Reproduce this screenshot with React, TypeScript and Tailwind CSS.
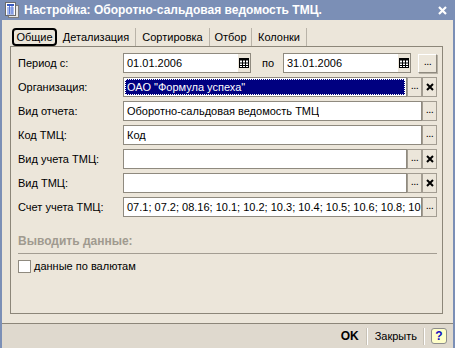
import React from "react";

const font = { fontFamily: '"Liberation Sans", Arial, sans-serif' };

const Dots = () => <span className="leading-none -mt-[4px] text-[11px] font-normal tracking-[-0.5px]">...</span>;

const SmallBtn = ({ children }: { children: React.ReactNode }) => (
    <div className="w-[15px] h-[20px] shrink-0 flex items-center justify-center bg-[#ece6da] border border-[#a39d92] text-black text-[12px]">
        {children}
    </div>
);

const Cross = () => (
    <svg width="8" height="8" viewBox="0 0 8 8">
        <path d="M1 1 L7 7 M7 1 L1 7" stroke="#000" strokeWidth="2" />
    </svg>
);

const CalIcon = () => (
    <svg width="10" height="10" viewBox="0 0 10 10">
        <rect x="0.5" y="0.5" width="9" height="9" fill="#fff" stroke="#000" />
        <rect x="0.5" y="0.5" width="9" height="2" fill="#000" />
        <path d="M0 5 H10 M0 7.5 H10 M3.5 2 V10 M6.5 2 V10" stroke="#000" strokeWidth="1" />
    </svg>
);

const Input = ({ value, className = "", selected = false }: { value: string, className?: string, selected?: boolean }) => (
    <div className={`h-[20px] min-w-0 border border-[#8f8a7f] bg-white flex items-center overflow-hidden whitespace-nowrap ${className}`}>
        {selected ? (
            <div className="m-[1px] h-[16px] flex-1 bg-[#000080] text-white outline-1 outline-dotted outline-white -outline-offset-1 pl-[2px] leading-[16px]">
                {value}
            </div>
        ) : (
            <span className="pl-[3px] overflow-hidden">{value}</span>
        )}
    </div>
);

const Row = ({ label, children }: { label: string, children: React.ReactNode }) => (
    <div className="flex items-center h-[20px]">
        <div className="w-[105px] shrink-0">{label}</div>
        <div className="flex flex-1 min-w-0 items-center">{children}</div>
    </div>
);

export default function App() {
    return (
        <div style={font} className="w-[455px] h-[348px] bg-[#ece6da] text-[11px] text-black flex flex-col border-l-2 border-r-2 border-[#7b8fb6] overflow-hidden">
            <div className="h-[20px] -mx-[2px] bg-[#7b8fb6] flex items-center shrink-0">
                <svg className="ml-[4px]" width="16" height="17" viewBox="0 0 16 17">
                    <rect x="4.5" y="3.5" width="10" height="12" fill="#e8e8e8" stroke="#7c7c7c" />
                    <rect x="1.5" y="0.5" width="10" height="13" fill="#fff" stroke="#6b6b6b" />
                    <rect x="3" y="2" width="7" height="2" fill="#3a5bbf" />
                    <path d="M3 6 H10 M3 8 H10 M3 10 H10 M3 12 H10 M5.5 4 V12 M8 4 V12" stroke="#5a7bd8" strokeWidth="1" />
                </svg>
                <div className="ml-[4px] text-white font-bold text-[12px]">Настройка: Оборотно-сальдовая ведомость ТМЦ.</div>
                <svg className="ml-auto mr-[8px]" width="9" height="9" viewBox="0 0 9 9">
                    <path d="M1 1 L8 8 M8 1 L1 8" stroke="#fff" strokeWidth="2.2" />
                </svg>
            </div>

            <div className="flex flex-col pl-[8px] pr-[10px] pt-[8px] shrink-0">
                <div className="flex h-[18px] pl-[2px] items-end">
                    <div className="h-[18px] w-[45px] border-2 border-black rounded-[4px] flex items-center justify-center bg-[#ece6da]">Общие</div>
                    <div className="h-[18px] w-[79px] flex items-center justify-center border-r border-[#b9b3a8]">Детализация</div>
                    <div className="h-[18px] w-[74px] flex items-center justify-center border-r border-[#b9b3a8]">Сортировка</div>
                    <div className="h-[18px] w-[42px] flex items-center justify-center border-r border-[#b9b3a8]">Отбор</div>
                    <div className="h-[18px] w-[55px] flex items-center justify-center border-r border-[#b9b3a8]">Колонки</div>
                </div>
                <div className="h-[268px] border border-[#8c8679] pl-[7px] pr-[5px] pt-[6px] flex flex-col gap-[4px]">
                    <Row label="Период с:">
                        <div className="w-[128px] h-[20px] border border-[#8f8a7f] bg-white flex items-center">
                            <span className="pl-[3px] flex-1">01.01.2006</span>
                            <div className="w-[12px] h-[18px] bg-[#ece6da] flex items-center justify-center"><CalIcon /></div>
                        </div>
                        <span className="ml-[11px] w-[21px]">по</span>
                        <div className="w-[128px] h-[20px] border border-[#8f8a7f] bg-white flex items-center">
                            <span className="pl-[3px] flex-1">31.01.2006</span>
                            <div className="w-[12px] h-[18px] bg-[#ece6da] flex items-center justify-center"><CalIcon /></div>
                        </div>
                        <div className="ml-auto w-[19px] h-[19px] bg-[#ece6da] border border-t-white border-l-white border-r-[#8f8a7f] border-b-[#8f8a7f] shadow-[1px_1px_0_#b8b2a6] flex items-center justify-center"><Dots /></div>
                    </Row>
                    <Row label="Организация:">
                        <Input className="flex-1" value={'ОАО "Формула успеха"'} selected />
                        <SmallBtn><Dots /></SmallBtn>
                        <SmallBtn><Cross /></SmallBtn>
                    </Row>
                    <Row label="Вид отчета:">
                        <Input className="flex-1" value="Оборотно-сальдовая ведомость ТМЦ" />
                        <SmallBtn><Dots /></SmallBtn>
                    </Row>
                    <Row label="Код ТМЦ:">
                        <Input className="flex-1" value="Код" />
                        <SmallBtn><Dots /></SmallBtn>
                    </Row>
                    <Row label="Вид учета ТМЦ:">
                        <Input className="flex-1" value="" />
                        <SmallBtn><Dots /></SmallBtn>
                        <SmallBtn><Cross /></SmallBtn>
                    </Row>
                    <Row label="Вид ТМЦ:">
                        <Input className="flex-1" value="" />
                        <SmallBtn><Dots /></SmallBtn>
                        <SmallBtn><Cross /></SmallBtn>
                    </Row>
                    <Row label="Счет учета ТМЦ:">
                        <Input className="flex-1" value="07.1; 07.2; 08.16; 10.1; 10.2; 10.3; 10.4; 10.5; 10.6; 10.8; 10.9" />
                        <SmallBtn><Dots /></SmallBtn>
                    </Row>
                    <div className="mt-[11px] pb-[3px] border-b border-[#a39d92] font-bold text-[12px] text-[#a09a8f]">Выводить данные:</div>
                    <div className="flex items-center">
                        <div className="w-[13px] h-[13px] bg-white border border-[#8f8a7f]" />
                        <span className="ml-[3px]">данные по валютам</span>
                    </div>
                </div>
            </div>

            <div className="mt-[9px] -mx-[2px] border-t border-[#8c8679] bg-[#dfd9ce] flex-1 flex items-center justify-end pr-[8px]">
                <span className="font-bold text-[12px]">OK</span>
                <div className="mx-[7px] w-[2px] h-[17px] border-l border-[#c8c2b6] border-r border-r-white" />
                <span>Закрыть</span>
                <div className="mx-[6px] w-[2px] h-[17px] border-l border-[#c8c2b6] border-r border-r-white" />
                <div className="w-[16px] h-[16px] rounded-[3px] bg-[#ffffc8] border border-[#8c8c8c] flex items-center justify-center text-[#1010c0] font-bold text-[12px]">?</div>
            </div>
        </div>
    );
}
